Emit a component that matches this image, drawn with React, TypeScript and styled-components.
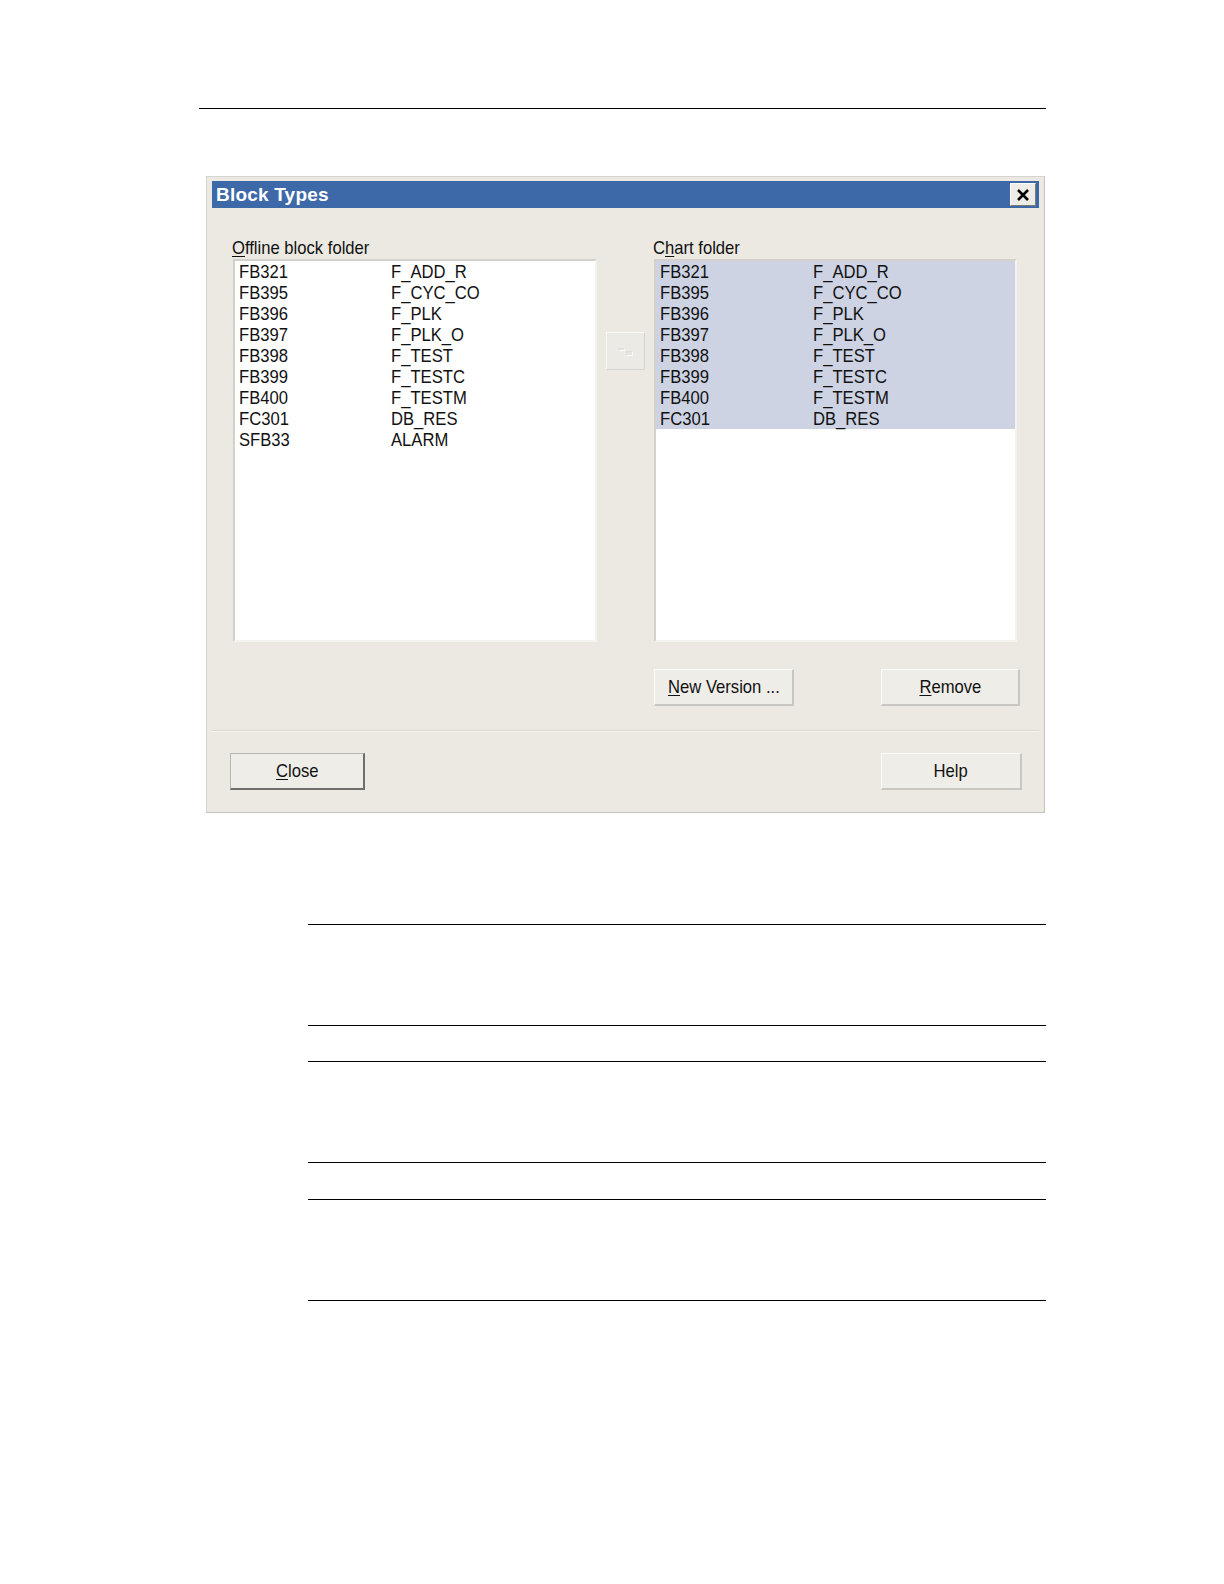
import React from "react";
import styled, { createGlobalStyle } from "styled-components";

const Global = createGlobalStyle`
  html, body { margin: 0; padding: 0; background: #ffffff; }
  body { font-family: "Liberation Sans", Arial, sans-serif; }
`;

const Page = styled.div`
  display: flex;
  flex-direction: column;
  padding-top: 108px;
  padding-bottom: 200px;
`;

const Rule = styled.div<{ $left: number; $width: number; $top: number }>`
  margin-left: ${(p) => p.$left}px;
  margin-top: ${(p) => p.$top}px;
  width: ${(p) => p.$width}px;
  height: 1px;
  background: #000;
  flex: none;
`;

const Dialog = styled.div`
  margin-left: 206px;
  margin-top: 67px;
  width: 839px;
  height: 637px;
  box-sizing: border-box;
  background: #ece9e2;
  border: 1px solid #d6d4ce;
  border-right-color: #c4c2bc;
  border-bottom-color: #c4c2bc;
  padding: 4px 5px 0 5px;
  display: flex;
  flex-direction: column;
  flex: none;
`;

const TitleBar = styled.div`
  height: 27px;
  background: #3e69a8;
  display: flex;
  align-items: center;
  justify-content: space-between;
  padding: 0 3px 0 4px;
`;

const Title = styled.span`
  color: #fff;
  font-weight: bold;
  font-size: 19px;
  letter-spacing: 0.2px;
`;

const CloseX = styled.div`
  width: 26px;
  height: 23px;
  box-sizing: border-box;
  background: #eeece6;
  border: 1px solid #fafafa;
  border-right-color: #7d7b78;
  border-bottom-color: #7d7b78;
  display: flex;
  align-items: center;
  justify-content: center;
`;

const Content = styled.div`
  padding: 30px 21px 0 21px;
  display: flex;
  flex-direction: column;
`;

const Columns = styled.div`
  display: grid;
  grid-template-columns: 364px 39px 363px;
  column-gap: 9px;
`;

const Panel = styled.div`
  display: flex;
  flex-direction: column;
`;

/* narrow, tall system font look */
const Narrow = styled.span<{ $origin?: string }>`
  display: inline-block;
  font-size: 19px;
  white-space: nowrap;
  transform: scaleX(0.875);
  transform-origin: ${(p) => p.$origin || "left"} center;
`;

const Label = styled.div`
  height: 21px;
  line-height: 20px;
  color: #111;
  margin-left: -1px;
`;

const U = styled.span`
  text-decoration: underline;
  text-decoration-thickness: 1px;
  text-underline-offset: 2px;
`;

const List = styled.div`
  height: 383px;
  box-sizing: border-box;
  background: #fff;
  border: 2px solid #d3d1cb;
  border-right-color: #f4f3ef;
  border-bottom-color: #f4f3ef;
  display: flex;
  flex-direction: column;
`;

const Row = styled.div<{ $sel?: boolean }>`
  height: 21px;
  display: flex;
  align-items: center;
  padding-left: 4px;
  background: ${(p) => (p.$sel ? "#cdd3e3" : "transparent")};
  color: #111;
`;

const Cell = styled.span<{ $w?: number }>`
  width: ${(p) => (p.$w ? `${p.$w}px` : "auto")};
  flex: none;
  line-height: 21px;
`;

const Middle = styled.div`
  padding-top: 94px;
`;

const ArrowBtn = styled.div`
  width: 39px;
  height: 38px;
  box-sizing: border-box;
  background: #eceae4;
  border: 1px solid #f8f8f6;
  border-right-color: #d6d4ce;
  border-bottom-color: #d6d4ce;
  display: flex;
  align-items: center;
  justify-content: center;
`;

const BtnRow = styled.div`
  display: flex;
  justify-content: space-between;
  margin-top: 27px;
  margin-left: 421px;
  width: 366px;
`;

const Button = styled.button<{ $w: number; $default?: boolean }>`
  width: ${(p) => p.$w}px;
  height: 37px;
  box-sizing: border-box;
  background: #efede8;
  font-family: "Liberation Sans", Arial, sans-serif;
  color: #111;
  padding: 0;
  border-style: solid;
  border-width: 1px 2px 2px 1px;
  border-color: ${(p) =>
    p.$default
      ? "#b8b6b0 #6f6e6b #6f6e6b #b8b6b0"
      : "#fbfbfa #c9c7c1 #c9c7c1 #fbfbfa"};
  display: flex;
  align-items: center;
  justify-content: center;
`;

const Separator = styled.div`
  margin-top: 24px;
  height: 1px;
  background: #d9d7d1;
  border-bottom: 1px solid #f8f7f4;
`;

const Footer = styled.div`
  display: flex;
  justify-content: space-between;
  padding: 21px 17px 0 18px;
`;

const left = [
  ["FB321", "F_ADD_R"],
  ["FB395", "F_CYC_CO"],
  ["FB396", "F_PLK"],
  ["FB397", "F_PLK_O"],
  ["FB398", "F_TEST"],
  ["FB399", "F_TESTC"],
  ["FB400", "F_TESTM"],
  ["FC301", "DB_RES"],
  ["SFB33", "ALARM"],
];

const right = left.slice(0, 8);

export default function App() {
  return (
    <Page>
      <Global />
      <Rule $left={199} $width={847} $top={0} />
      <Dialog>
        <TitleBar>
          <Title>Block Types</Title>
          <CloseX>
            <svg width="14" height="12" viewBox="0 0 14 12">
              <path d="M2 1 L12 11 M12 1 L2 11" stroke="#000" strokeWidth="2.6" />
            </svg>
          </CloseX>
        </TitleBar>
        <Content>
          <Columns>
            <Panel>
              <Label>
                <Narrow>
                  <U>O</U>ffline block folder
                </Narrow>
              </Label>
              <List>
                {left.map(([a, b]) => (
                  <Row key={a}>
                    <Cell $w={152}>
                      <Narrow>{a}</Narrow>
                    </Cell>
                    <Cell>
                      <Narrow>{b}</Narrow>
                    </Cell>
                  </Row>
                ))}
              </List>
            </Panel>
            <Middle>
              <ArrowBtn>
                <svg width="20" height="12" viewBox="0 0 20 12">
                  <path d="M3 5 H9 M11 8 H17 M11 10 H17" stroke="#ffffff" strokeWidth="1.4" />
                  <path d="M2 4 H8 M10 7 H16 M10 9 H16" stroke="#d2d0ca" strokeWidth="1" />
                </svg>
              </ArrowBtn>
            </Middle>
            <Panel>
              <Label>
                <Narrow>
                  C<U>h</U>art folder
                </Narrow>
              </Label>
              <List>
                {right.map(([a, b]) => (
                  <Row key={a} $sel>
                    <Cell $w={153}>
                      <Narrow>{a}</Narrow>
                    </Cell>
                    <Cell>
                      <Narrow>{b}</Narrow>
                    </Cell>
                  </Row>
                ))}
              </List>
            </Panel>
          </Columns>
          <BtnRow>
            <Button $w={140}>
              <Narrow $origin="center">
                <U>N</U>ew Version ...
              </Narrow>
            </Button>
            <Button $w={139}>
              <Narrow $origin="center">
                <U>R</U>emove
              </Narrow>
            </Button>
          </BtnRow>
        </Content>
        <Separator />
        <Footer>
          <Button $w={135} $default>
            <Narrow $origin="center">
              <U>C</U>lose
            </Narrow>
          </Button>
          <Button $w={141}>
            <Narrow $origin="center">Help</Narrow>
          </Button>
        </Footer>
      </Dialog>
      <Rule $left={308} $width={738} $top={111} />
      <Rule $left={308} $width={738} $top={100} />
      <Rule $left={308} $width={738} $top={35} />
      <Rule $left={308} $width={738} $top={100} />
      <Rule $left={308} $width={738} $top={36} />
      <Rule $left={308} $width={738} $top={100} />
    </Page>
  );
}
